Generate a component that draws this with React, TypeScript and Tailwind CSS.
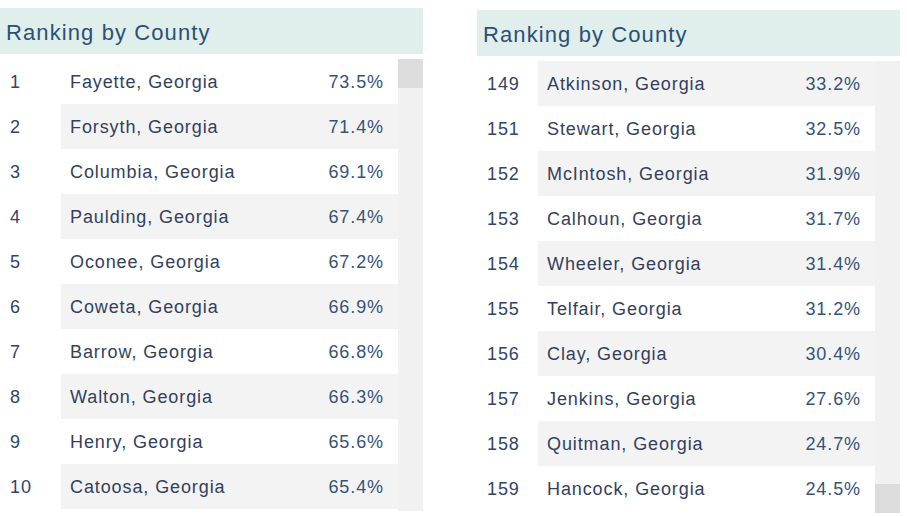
const leftRows = [
  { rank: 1, name: "Fayette, Georgia", pct: "73.5%" },
  { rank: 2, name: "Forsyth, Georgia", pct: "71.4%" },
  { rank: 3, name: "Columbia, Georgia", pct: "69.1%" },
  { rank: 4, name: "Paulding, Georgia", pct: "67.4%" },
  { rank: 5, name: "Oconee, Georgia", pct: "67.2%" },
  { rank: 6, name: "Coweta, Georgia", pct: "66.9%" },
  { rank: 7, name: "Barrow, Georgia", pct: "66.8%" },
  { rank: 8, name: "Walton, Georgia", pct: "66.3%" },
  { rank: 9, name: "Henry, Georgia", pct: "65.6%" },
  { rank: 10, name: "Catoosa, Georgia", pct: "65.4%" },
];

const rightRows = [
  { rank: 149, name: "Atkinson, Georgia", pct: "33.2%" },
  { rank: 151, name: "Stewart, Georgia", pct: "32.5%" },
  { rank: 152, name: "McIntosh, Georgia", pct: "31.9%" },
  { rank: 153, name: "Calhoun, Georgia", pct: "31.7%" },
  { rank: 154, name: "Wheeler, Georgia", pct: "31.4%" },
  { rank: 155, name: "Telfair, Georgia", pct: "31.2%" },
  { rank: 156, name: "Clay, Georgia", pct: "30.4%" },
  { rank: 157, name: "Jenkins, Georgia", pct: "27.6%" },
  { rank: 158, name: "Quitman, Georgia", pct: "24.7%" },
  { rank: 159, name: "Hancock, Georgia", pct: "24.5%" },
];

type Row = { rank: number; name: string; pct: string };

function RankingPanel({ rows, stripeOdd, thumbAtBottom }: { rows: Row[]; stripeOdd: boolean; thumbAtBottom: boolean }) {
  return (
    <div className="w-[423px] flex flex-col">
      <div className="h-[46px] bg-[#e0efeb] flex items-center pl-[6px] pt-[3px] text-[22px] tracking-wider text-[#2b5077]">
        Ranking by County
      </div>
      <div className="mt-[5px] h-[452px] flex">
        <div className="w-[398px] flex flex-col">
          {rows.map((row, index) => {
            const striped = stripeOdd ? index % 2 === 0 : index % 2 === 1;
            return (
              <div key={row.rank} className="h-[45px] flex items-center text-[18px] tracking-wider">
                <div className="w-[61px] pl-[10px] pt-[1px] text-[#2f4468]">{row.rank}</div>
                <div className={`flex-1 h-full flex items-center pl-[9px] pr-[14px] pt-[1px] ${striped ? "bg-[#f3f3f3]" : "bg-white"}`}>
                  <span className="flex-1 text-[#333f5e]">{row.name}</span>
                  <span className="text-[#345379]">{row.pct}</span>
                </div>
              </div>
            );
          })}
        </div>
        <div className={`w-[25px] bg-[#f1f1f1] flex flex-col ${thumbAtBottom ? "justify-end" : "justify-start"}`}>
          <div className="h-[29px] bg-[#dcdcdc]" />
        </div>
      </div>
    </div>
  );
}

export default function App() {
  return (
    <div className="w-[907px] h-[516px] bg-white flex items-start gap-[54px] pt-[8px] font-['Liberation_Sans',Arial,sans-serif]">
      <RankingPanel rows={leftRows} stripeOdd={false} thumbAtBottom={false} />
      <div className="mt-[2px]">
        <RankingPanel rows={rightRows} stripeOdd={true} thumbAtBottom={true} />
      </div>
    </div>
  );
}
